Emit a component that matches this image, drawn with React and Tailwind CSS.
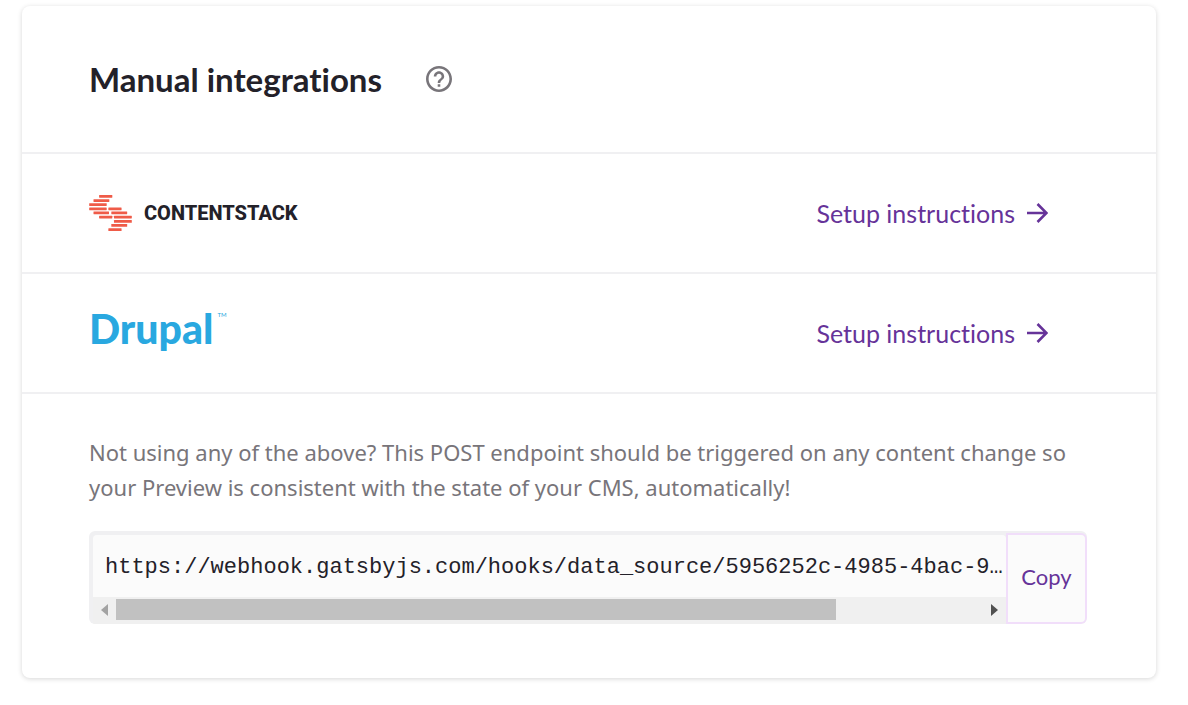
import React, { useState } from 'react';

const WEBHOOK_URL = 'https://webhook.gatsbyjs.com/hooks/data_source/5956252c-4985-4bac-9…';

// x, y and width of each bar in the Contentstack mark
const BARS = [
    [30, 0, 40],
    [13, 13, 48],
    [0, 25, 53],
    [0, 38, 53],
    [58, 38, 40],
    [13, 50, 47],
    [67, 50, 48],
    [30, 63, 40],
    [75, 63, 54],
    [75, 76, 54],
    [67, 88, 48],
    [58, 101, 40],
];

const ContentstackLogo = () => (
    <div className="flex items-center gap-3">
        <svg width="43" height="36" viewBox="0 0 129 109" fill="#ef5b48" aria-hidden="true">
            {BARS.map(([x, y, width]) => (
                <rect key={`${x}-${y}`} x={x} y={y} width={width} height="8" rx="1" />
            ))}
        </svg>
        <span className="font-['Roboto',sans-serif] text-[20px] font-extrabold leading-9 text-[#232129]">CONTENTSTACK</span>
    </div>
);

const DrupalLogo = () => (
    <div className="flex items-start gap-1 pb-2 font-['Lato',sans-serif] text-[#29a8e0]">
        <span className="text-[41px] font-black leading-10">Drupal</span>
        <span className="text-[6px] leading-3">TM</span>
    </div>
);

const IntegrationRow = ({ children }) => (
    <div className="flex h-[120px] items-center justify-between border-b-2 border-[#f0f0f2] pl-[67px] pr-[108px]">
        {children}
        <a href="#setup" className="flex items-center gap-3 font-['Lato',sans-serif] text-[25px] leading-9 text-[#663399]">
            Setup instructions
            <svg width="21" height="20" viewBox="0 0 21 20" fill="none" stroke="currentColor" strokeWidth="2.6" aria-hidden="true">
                <path d="M0 10H19.5M10.5 1L19.5 10L10.5 19" />
            </svg>
        </a>
    </div>
);

const App = () => {
    const [copied, setCopied] = useState(false);

    const handleCopy = async () => {
        try {
            await navigator.clipboard.writeText(WEBHOOK_URL);
            setCopied(true);
        } catch (err) {
            setCopied(false);
        }
    };

    return (
        <main className="pl-[22px] pr-8 pt-[6px] pb-6 [font-variant-ligatures:none]">
            <section className="rounded-lg bg-white shadow-[0_1px_5px_rgba(0,0,0,0.16)]">
                <header className="flex h-[148px] items-center gap-11 border-b-2 border-[#f0f0f2] pl-[67px]">
                    <h2 className="font-['Lato',sans-serif] text-[33px] font-bold leading-10 text-[#232129]">Manual integrations</h2>
                    <button type="button" aria-label="Help" className="text-[#78757a]">
                        <svg width="26" height="26" viewBox="2 2 20 20" fill="currentColor" aria-hidden="true">
                            <path d="M11 18h2v-2h-2v2zm1-16C6.48 2 2 6.48 2 12s4.48 10 10 10 10-4.48 10-10S17.52 2 12 2zm0 18c-4.41 0-8-3.59-8-8s3.59-8 8-8 8 3.59 8 8-3.59 8-8 8zm0-14c-2.21 0-4 1.79-4 4h2c0-1.1.9-2 2-2s2 .9 2 2c0 2-3 1.75-3 5h2c0-2.25 3-2.5 3-5 0-2.21-1.79-4-4-4z" />
                        </svg>
                    </button>
                </header>

                <IntegrationRow>
                    <ContentstackLogo />
                </IntegrationRow>
                <IntegrationRow>
                    <DrupalLogo />
                </IntegrationRow>

                <div className="pl-[67px] pr-[69px] pt-[41px] pb-[54px]">
                    <p className="font-['Noto_Sans',sans-serif] text-[22px] leading-[35px] text-[#78757a]">
                        Not using any of the above? This POST endpoint should be triggered on any content change so
                        your Preview is consistent with the state of your CMS, automatically!
                    </p>

                    <div className="mt-[26px] flex h-[93px] overflow-hidden rounded-md bg-[#f0f0f2]">
                        <div className="flex min-w-0 flex-1 flex-col pl-1 pt-1">
                            <code className="block h-[62px] truncate rounded-t-sm bg-[#fbfbfb] pl-3 font-['Liberation_Mono',monospace] text-[22px] leading-[66px] text-[#232129]">
                                {WEBHOOK_URL}
                            </code>
                            {/* Horizontal scrollbar */}
                            <div className="flex flex-1 items-center gap-2 bg-[#f0f0f0] px-2 pb-[2px]" aria-hidden="true">
                                <svg width="7" height="12" viewBox="0 0 7 12" fill="#a3a3a3">
                                    <path d="M7 0V12L0 6Z" />
                                </svg>
                                <div className="flex-1">
                                    <div className="h-[21px] w-[83%] bg-[#c1c1c1]" />
                                </div>
                                <svg width="7" height="12" viewBox="0 0 7 12" fill="#505050">
                                    <path d="M0 0V12L7 6Z" />
                                </svg>
                            </div>
                        </div>
                        <button
                            type="button"
                            onClick={handleCopy}
                            className="mt-[2px] w-[81px] rounded-r-md border-2 border-[#f1defa] bg-[#fbfbfb] pb-1 font-['Lato',sans-serif] text-[22px] text-[#663399]"
                        >
                            {copied ? 'Copied' : 'Copy'}
                        </button>
                    </div>
                </div>
            </section>
        </main>
    );
};

export default App;
